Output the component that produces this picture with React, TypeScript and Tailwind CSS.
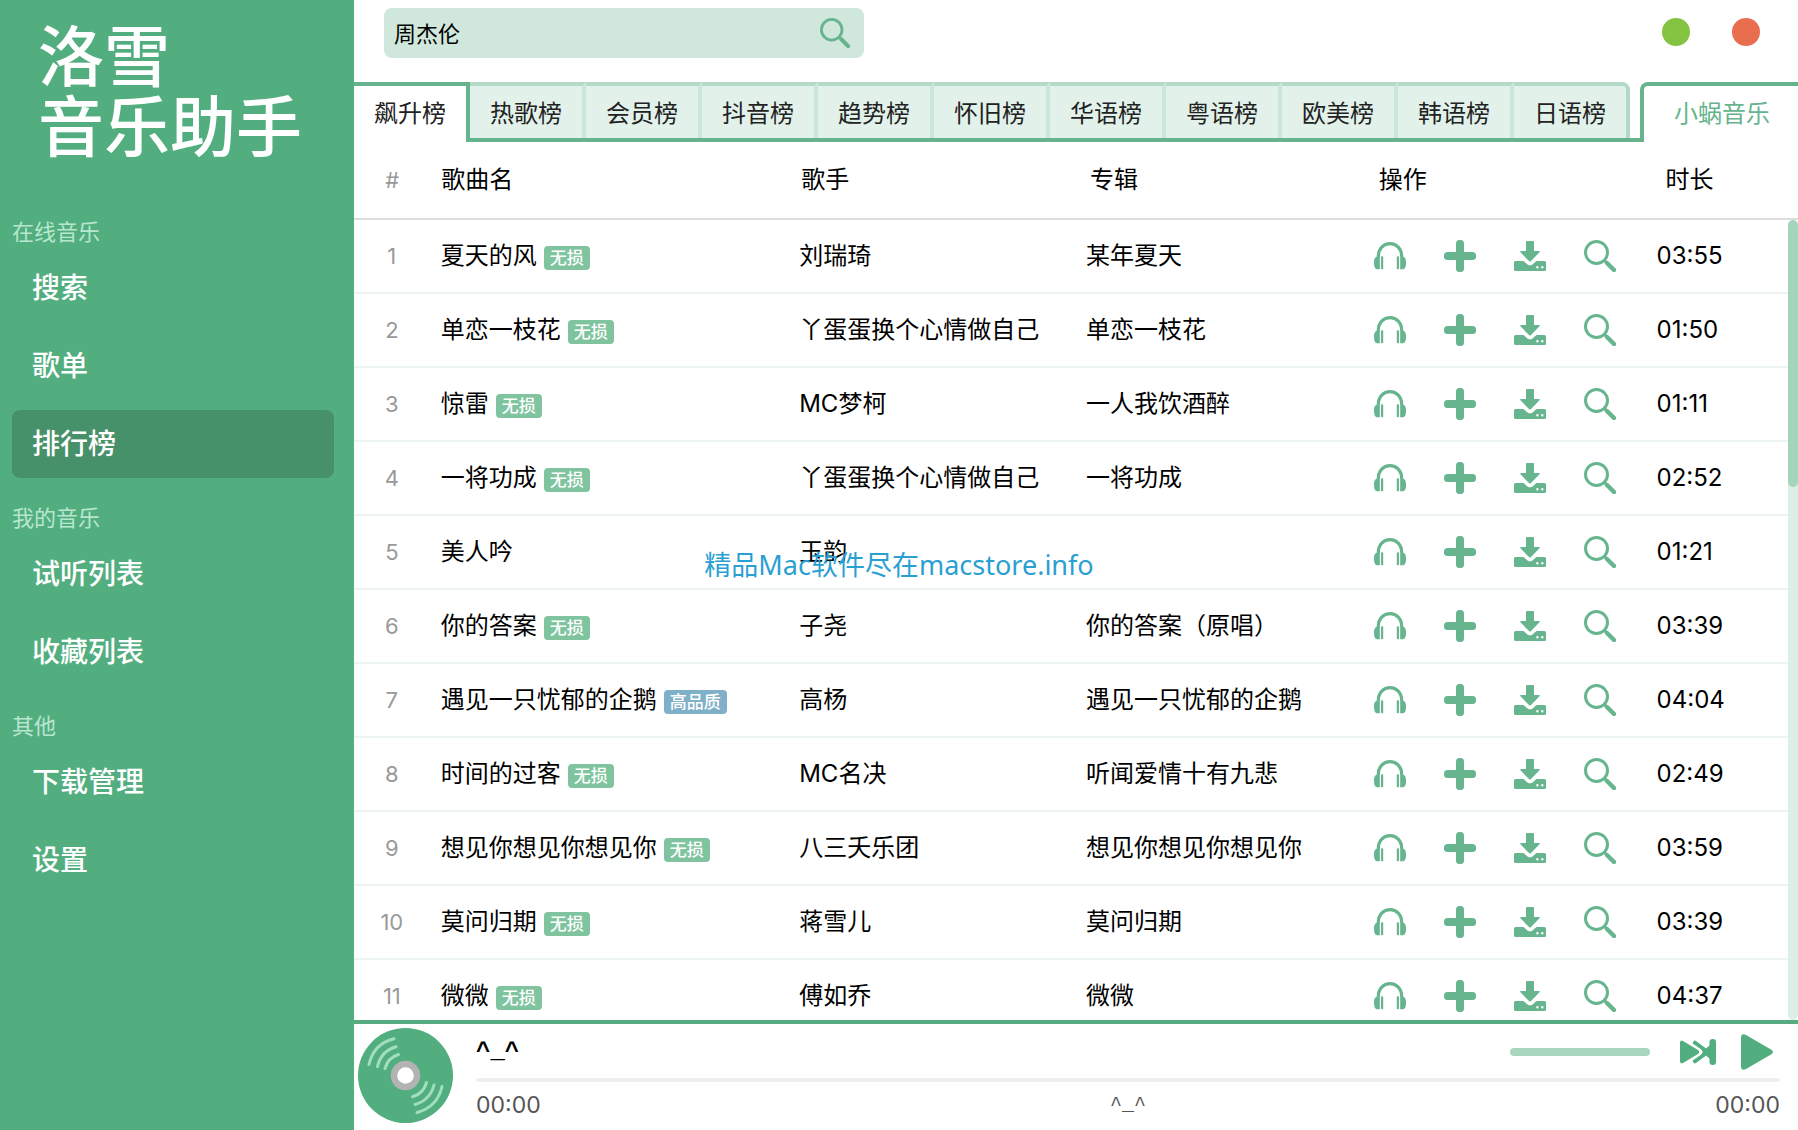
import React from 'react';

type Song = {
  name: string;
  quality?: string;
  singer: string;
  album: string;
  time: string;
};

const menu = [
  { title: '在线音乐', items: ['搜索', '歌单', '排行榜'] },
  { title: '我的音乐', items: ['试听列表', '收藏列表'] },
  { title: '其他', items: ['下载管理', '设置'] },
];

const boards = ['热歌榜', '会员榜', '抖音榜', '趋势榜', '怀旧榜', '华语榜', '粤语榜', '欧美榜', '韩语榜', '日语榜'];

const songs: Song[] = [
  { name: '夏天的风', quality: '无损', singer: '刘瑞琦', album: '某年夏天', time: '03:55' },
  { name: '单恋一枝花', quality: '无损', singer: '丫蛋蛋换个心情做自己', album: '单恋一枝花', time: '01:50' },
  { name: '惊雷', quality: '无损', singer: 'MC梦柯', album: '一人我饮酒醉', time: '01:11' },
  { name: '一将功成', quality: '无损', singer: '丫蛋蛋换个心情做自己', album: '一将功成', time: '02:52' },
  { name: '美人吟', singer: '玉韵', album: '', time: '01:21' },
  { name: '你的答案', quality: '无损', singer: '子尧', album: '你的答案（原唱）', time: '03:39' },
  { name: '遇见一只忧郁的企鹅', quality: '高品质', singer: '高杨', album: '遇见一只忧郁的企鹅', time: '04:04' },
  { name: '时间的过客', quality: '无损', singer: 'MC名决', album: '听闻爱情十有九悲', time: '02:49' },
  { name: '想见你想见你想见你', quality: '无损', singer: '八三夭乐团', album: '想见你想见你想见你', time: '03:59' },
  { name: '莫问归期', quality: '无损', singer: '蒋雪儿', album: '莫问归期', time: '03:39' },
  { name: '微微', quality: '无损', singer: '傅如乔', album: '微微', time: '04:37' },
];

function SearchIcon({ className }: { className?: string }) {
  return (
    <svg viewBox="0 0 32 32" className={className} fill="none" stroke="currentColor">
      <circle cx="12.5" cy="12.5" r="11" strokeWidth="3" />
      <path d="M20.5 20.5L22.5 22.5" strokeWidth="3" />
      <path d="M23 23L30 30" strokeWidth="4.4" strokeLinecap="round" />
    </svg>
  );
}

function HeadphoneIcon() {
  return (
    <svg viewBox="0 0 32 32" className="h-8 w-8" fill="currentColor">
      <path d="M4.3 16.5C4.3 8.6 9.6 3.7 16 3.7S27.7 8.6 27.7 16.5" fill="none" stroke="currentColor" strokeWidth="3.2" />
      <path d="M5.8 15.8V29.2H3C1 29.2 0 27 0 22.5S2 15.8 5.8 15.8Z" />
      <path d="M26.2 15.8V29.2H29C31 29.2 32 27 32 22.5S30 15.8 26.2 15.8Z" />
      <rect x="7" y="16.3" width="2.2" height="12.9" rx="0.8" />
      <rect x="22.8" y="16.3" width="2.2" height="12.9" rx="0.8" />
    </svg>
  );
}

function PlusIcon() {
  return (
    <svg viewBox="0 0 32 32" className="h-8 w-8" fill="currentColor">
      <rect x="12" y="0" width="8" height="32" rx="3.5" />
      <rect x="0" y="12" width="32" height="8" rx="3.5" />
    </svg>
  );
}

function DownloadIcon() {
  return (
    <svg viewBox="0 0 32 32" className="h-8 w-8" fill="currentColor">
      <path d="M13 1H19Q20 1 20 2V11H25Q26.6 11 25.5 12.3L17 21Q16 22 15 21L6.5 12.3Q5.4 11 7 11H12V2Q12 1 13 1Z" />
      <path
        fillRule="evenodd"
        d="M1.5 21H9.5L13.5 24.4Q16 26.3 18.5 24.4L22.5 21H30.5Q32 21 32 22.5V29.5Q32 31 30.5 31H1.5Q0 31 0 29.5V22.5Q0 21 1.5 21ZM23.4 26A1.2 1.2 0 1 0 23.4 28.4A1.2 1.2 0 1 0 23.4 26ZM28.3 26A1.2 1.2 0 1 0 28.3 28.4A1.2 1.2 0 1 0 28.3 26Z"
      />
    </svg>
  );
}

function Disc() {
  return (
    <svg viewBox="0 0 95 95" className="h-[95px] w-[95px] shrink-0">
      <circle cx="47.5" cy="47.5" r="47.5" fill="#52ae7f" />
      <g fill="none" stroke="#a0debd" strokeWidth="3" strokeLinecap="round">
        <path d="M11 36.5C14 23 23 14 36 10.8" />
        <path d="M19.5 38.5C22 28 28.5 21.5 38 18.8" />
        <path d="M27 40.5C29 33 34 28.5 40.5 26.5" />
        <path d="M84 58.5C81 72 72 81 59 84.5" />
        <path d="M76 57C73.5 67 67 73.5 57 76.5" />
        <path d="M68.5 54.5C66.5 62 62 66.5 54.5 68.8" />
      </g>
      <circle cx="47.5" cy="47.5" r="11.5" fill="#fff" stroke="#b3b3b3" strokeWidth="6.4" />
    </svg>
  );
}

function Columns() {
  return (
    <colgroup>
      <col className="w-[5%]" />
      <col className="w-[25%]" />
      <col className="w-[20%]" />
      <col className="w-[20%]" />
      <col className="w-[20%]" />
      <col className="w-[10%]" />
    </colgroup>
  );
}

function Sidebar() {
  return (
    <aside className="w-[354px] shrink-0 bg-[#52ae7f] text-white">
      <h1 className="h-48 pt-[22px] pl-[38px] text-[66px] leading-[70px] font-medium">
        洛雪
        <br />
        音乐助手
      </h1>
      <nav className="pr-5 pl-3">
        {menu.map((group) => (
          <div key={group.title} className="pt-[18px]">
            <h2 className="text-[22px] leading-[44px] text-[#b8e6cf]">{group.title}</h2>
            <div className="flex flex-col gap-[10px]">
              {group.items.map((item) => (
                <a
                  key={item}
                  href="#"
                  className={
                    item === '排行榜'
                      ? 'rounded-lg bg-[#47916a] pl-5 text-[28px] leading-[68px] font-medium'
                      : 'rounded-lg pl-5 text-[28px] leading-[68px] font-medium'
                  }
                >
                  {item}
                </a>
              ))}
            </div>
          </div>
        ))}
      </nav>
    </aside>
  );
}

function TopBar() {
  return (
    <header className="flex h-[82px] shrink-0 items-start justify-between pt-2 pr-[38px] pl-[30px]">
      <div className="flex h-[50px] w-[480px] items-center rounded-lg bg-[#cfe8db] pr-[14px] pl-[10px]">
        <input
          type="text"
          aria-label="搜索"
          defaultValue="周杰伦"
          className="min-w-0 flex-1 bg-transparent pt-[2px] text-[22px] text-black outline-none"
        />
        <button aria-label="搜索" className="text-[#68b48f]">
          <SearchIcon className="h-[30px] w-[30px]" />
        </button>
      </div>
      <div className="flex gap-[42px] pt-[10px]">
        <button aria-label="最小化" className="h-7 w-7 rounded-full bg-[#85c443]" />
        <button aria-label="关闭" className="h-7 w-7 rounded-full bg-[#e96e50]" />
      </div>
    </header>
  );
}

function Tabs() {
  return (
    <div className="flex h-[60px] shrink-0 text-[24px] text-[#222]">
      <button className="border-t-4 border-r-4 border-[#66b48d] px-5">飙升榜</button>
      <div className="flex flex-1 border-b-4 border-[#66b48d]">
        {boards.map((board) => (
          <button
            key={board}
            className="border-t-4 border-r-4 border-t-[#b2dac6] border-r-[#cbe6d9] bg-[#e2f2ea] px-5 pt-1 last:rounded-tr-lg last:border-r-[#b2dac6]"
          >
            {board}
          </button>
        ))}
      </div>
      <select
        aria-label="音源"
        className="w-[158px] appearance-none rounded-tl-lg border-t-4 border-l-4 border-[#66b48d] bg-white pl-[30px] text-[#66b48d] outline-none"
      >
        <option>小蜗音乐</option>
      </select>
    </div>
  );
}

function SongList() {
  return (
    <>
      <table className="w-full shrink-0 table-fixed border-separate border-spacing-0 text-left text-[24px]">
        <Columns />
        <thead>
          <tr className="h-[78px] [&>th]:border-b-2 [&>th]:border-[#ddd]">
            <th className="pl-1 text-center text-[22px] font-normal text-[#999]">#</th>
            <th className="px-[15px] font-normal">歌曲名</th>
            <th className="px-[14px] font-normal">歌手</th>
            <th className="px-[14px] font-normal">专辑</th>
            <th className="px-[14px] font-normal">操作</th>
            <th className="px-3 font-normal">时长</th>
          </tr>
        </thead>
      </table>
      <div className="flex min-h-0 flex-1">
        <div className="min-w-0 flex-1 overflow-hidden">
          <table className="w-full table-fixed border-separate border-spacing-0 text-[24px]">
            <Columns />
            <tbody>
              {songs.map((song, i) => (
                <tr key={song.name} className="h-[74px] [&>td]:border-b-2 [&>td]:border-[#ebf4f1]">
                  <td className="pl-1 text-center text-[22px] text-[#999]">{i + 1}</td>
                  <td className="px-[15px] whitespace-nowrap">
                    {song.name}
                    {song.quality && (
                      <span
                        className={
                          song.quality === '高品质'
                            ? 'ml-[7px] inline-block rounded bg-[#80b0c8] px-[6px] text-[17px] leading-6 font-medium text-white'
                            : 'ml-[7px] inline-block rounded bg-[#80c49f] px-[6px] text-[17px] leading-6 font-medium text-white'
                        }
                      >
                        {song.quality}
                      </span>
                    )}
                  </td>
                  <td className="px-[15px] whitespace-nowrap">{song.singer}</td>
                  <td className="px-[15px] whitespace-nowrap">{song.album}</td>
                  <td className="px-4">
                    <div className="flex gap-[38px] text-[#66b58e]">
                      <button aria-label="试听"><HeadphoneIcon /></button>
                      <button aria-label="添加"><PlusIcon /></button>
                      <button aria-label="下载"><DownloadIcon /></button>
                      <button aria-label="搜索"><SearchIcon className="h-8 w-8" /></button>
                    </div>
                  </td>
                  <td className="px-3">{song.time}</td>
                </tr>
              ))}
            </tbody>
          </table>
        </div>
        <div className="w-[10px] shrink-0 rounded-[5px] bg-[#dcefe6]">
          <div className="h-1/3 rounded-[5px] bg-[#a4d5bb]" />
        </div>
      </div>
    </>
  );
}

function Player() {
  return (
    <footer className="flex h-[110px] shrink-0 border-t-4 border-[#56ab80] pt-1 pr-[18px] pl-1">
      <Disc />
      <div className="ml-[23px] min-w-0 flex-1">
        <div className="mb-[2px] flex h-12 items-center">
          <span className="flex-1 font-['Liberation_Mono',monospace] text-[24px] leading-8 font-bold">^_^</span>
          <div className="h-2 w-[140px] rounded-full bg-[#a8d6bf]" />
          <button aria-label="下一首" className="ml-[30px] text-[#52ae7f]">
            <svg viewBox="0 0 36 26" className="h-[26px] w-9" fill="currentColor">
              <path d="M0 4Q0 0.5 3 2L18 11Q20.5 13 18 15L3 24Q0 25.5 0 22Z" />
              <path d="M15 4L27 13L15 22" fill="none" stroke="currentColor" strokeWidth="4.5" strokeLinecap="round" strokeLinejoin="round" />
              <path d="M22 13L30 6V20Z" />
              <rect x="29.5" y="0" width="6.5" height="26" rx="3.2" />
              <path d="M13 5.500L20.500 10.800Q23 13 20.500 15.200L13 20.500" fill="none" stroke="#fff" strokeWidth="1.2" />
            </svg>
          </button>
          <button aria-label="播放" className="mr-[7px] ml-[25px] text-[#52ae7f]">
            <svg viewBox="0 0 32 36" className="h-9 w-8" fill="currentColor">
              <path d="M0 4Q0 -1.5 5 1L30 15.5Q34 18 30 20.5L5 35Q0 37.5 0 32Z" />
            </svg>
          </button>
        </div>
        <div className="h-1 rounded-full bg-[#eee]" />
        <div className="flex h-[46px] items-center justify-between text-[23px] text-[#555]">
          <span>00:00</span>
          <span className="font-['Liberation_Mono',monospace] text-[20px]">^_^</span>
          <span>00:00</span>
        </div>
      </div>
    </footer>
  );
}

export default function App() {
  return (
    <div className="relative flex h-screen overflow-hidden bg-white font-['Inter','Noto_Sans_CJK_SC',sans-serif] text-black">
      <Sidebar />
      <main className="flex min-w-0 flex-1 flex-col">
        <TopBar />
        <Tabs />
        <SongList />
        <Player />
      </main>
      {/* Watermark */}
      <div className="pointer-events-none absolute inset-0 flex items-center justify-center pb-[2px] font-['Noto_Sans','Noto_Sans_CJK_SC',sans-serif] text-[27px] leading-none text-[#2a9fd2]">
        精品Mac软件尽在macstore.info
      </div>
    </div>
  );
}
